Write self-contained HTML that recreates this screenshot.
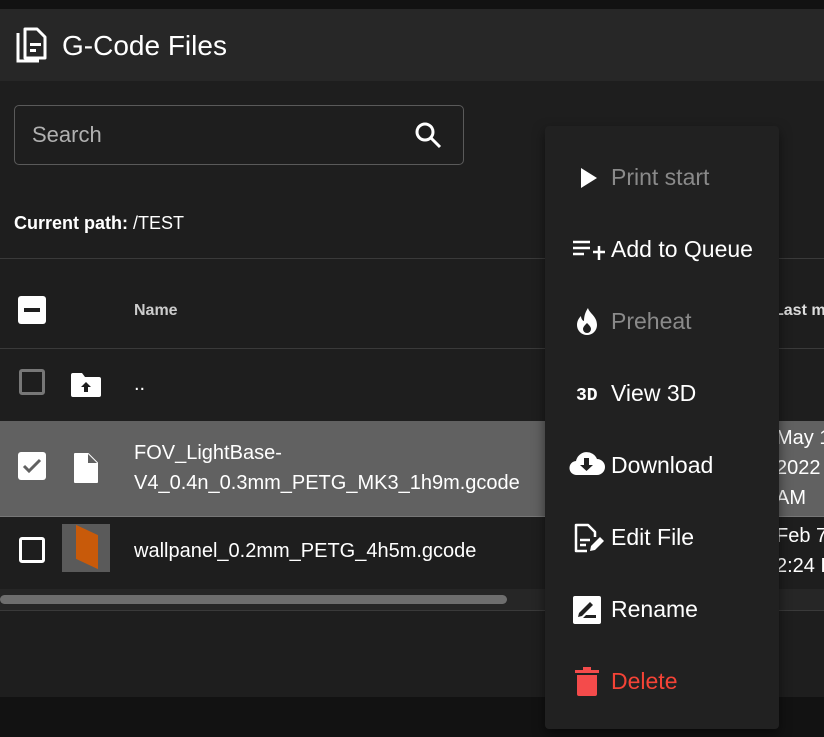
<!DOCTYPE html>
<html><head><style>
*{margin:0;padding:0;box-sizing:border-box}
body{width:824px;height:737px;background:#121212;font-family:"Liberation Sans",Roboto,sans-serif;color:#fff;position:relative;overflow:hidden}
.abs{position:absolute;white-space:nowrap}
.card{left:0;top:9px;width:824px;height:688px;background:#1e1e1e}
.hdr{left:0;top:9px;width:824px;height:72px;background:#272727}
.line{position:absolute;left:0;width:824px;height:1px;background:#3a3a3a}
.menu{left:545px;top:126px;width:234px;height:603px;background:#212121;border-radius:4px;box-shadow:0 5px 12px rgba(0,0,0,.5)}
.mi{position:absolute;left:66px;font-size:23px;line-height:28px;white-space:nowrap}
.ic{position:absolute}
</style></head><body>
<div class="abs card"></div>
<div class="abs hdr"></div>
<svg class="ic" style="left:16px;top:27px" width="32" height="36" viewBox="0 0 32 36"><path d="M2 6v28h21" fill="none" stroke="#fff" stroke-width="3"/><path d="M9 2h12l8 8v21H9z" fill="none" stroke="#fff" stroke-width="3" stroke-linejoin="round"/><rect x="14" y="16" width="11" height="3" fill="#fff"/><rect x="14" y="22" width="6" height="3" fill="#fff"/></svg>
<div class="abs" style="left:62px;top:29px;font-size:28px;line-height:34px">G-Code Files</div>
<div class="abs" style="left:14px;top:105px;width:450px;height:60px;border:1px solid #5a5a5a;border-radius:5px"></div>
<div class="abs" style="left:32px;top:122px;font-size:22px;color:#b0b0b0">Search</div>
<svg class="ic" style="left:413px;top:120px" width="30" height="30" viewBox="0 0 30 30"><circle cx="12" cy="12" r="8" fill="none" stroke="#fff" stroke-width="3"/><path d="M18 18l9 9" stroke="#fff" stroke-width="3"/></svg>
<div class="abs" style="left:14px;top:213px;font-size:18px"><b>Current path:</b> /TEST</div>
<div class="line" style="top:258px"></div>
<div class="abs" style="left:18px;top:296px;width:28px;height:28px;background:#fff;border-radius:3px"><div style="position:absolute;left:6px;top:12px;width:16px;height:4px;background:#1e1e1e"></div></div>
<div class="abs" style="left:134px;top:302px;font-size:16px;font-weight:bold;color:#ccc">Name</div>
<div class="abs" style="left:774px;top:302px;font-size:16px;font-weight:bold;color:#ddd">Last m</div>
<div class="line" style="top:348px"></div>
<div class="abs" style="left:19px;top:369px;width:26px;height:26px;border:3px solid #777;border-radius:3px"></div>
<svg class="ic" style="left:70px;top:372px" width="32" height="26" viewBox="0 0 32 26"><path d="M1 3a2 2 0 012-2h9l3 4h14a2 2 0 012 2v16a2 2 0 01-2 2H3a2 2 0 01-2-2z" fill="#fff"/><path d="M16 10l-5 5h3v5h4v-5h3z" fill="#1e1e1e"/></svg>
<div class="abs" style="left:134px;top:373px;font-size:20px">..</div>
<div class="abs" style="left:0;top:421px;width:824px;height:95px;background:#616161"></div>
<div class="abs" style="left:18px;top:452px;width:28px;height:28px;background:#fff;border-radius:3px"></div>
<svg class="ic" style="left:18px;top:452px" width="28" height="28"><path d="M6 14l5 5 11-11" fill="none" stroke="#616161" stroke-width="3"/></svg>
<svg class="ic" style="left:73px;top:452px" width="26" height="32" viewBox="0 0 26 32"><path d="M2 2h13l9 9v19H2z" fill="#fff" stroke="#fff" stroke-linejoin="round" stroke-width="2"/><path d="M15 2v9h9" fill="#616161"/></svg>
<div class="abs" style="left:134px;top:438px;font-size:20px;line-height:30px">FOV_LightBase-<br>V4_0.4n_0.3mm_PETG_MK3_1h9m.gcode</div>
<div class="abs" style="left:776px;top:423px;font-size:20px;line-height:30px">May 1<br>2022<br>AM</div>
<div class="line" style="top:516px;background:#777"></div>
<div class="abs" style="left:19px;top:537px;width:26px;height:26px;border:3px solid #fff;border-radius:3px"></div>
<div class="abs" style="left:62px;top:524px;width:48px;height:48px;background:#5a5a5a;overflow:hidden"><div style="position:absolute;left:14px;top:6px;width:22px;height:34px;background:#c85a0a;transform:skewY(25deg)"></div></div>
<div class="abs" style="left:134px;top:540px;font-size:20px">wallpanel_0.2mm_PETG_4h5m.gcode</div>
<div class="abs" style="left:776px;top:521px;font-size:20px;line-height:30px">Feb 7<br>2:24 P</div>
<div class="abs" style="left:0;top:589px;width:824px;height:21px;background:#262626"></div>
<div class="abs" style="left:0;top:595px;width:507px;height:9px;background:#6e6e6e;border-radius:5px"></div>
<div class="line" style="top:610px"></div>
<div class="abs menu">
<svg class="ic" style="left:34px;top:40px" width="20" height="24"><path d="M2 2l16 10-16 10z" fill="#fff"/></svg>
<div class="mi" style="top:37px;color:#8a8a8a">Print start</div>
<svg class="ic" style="left:28px;top:113px" width="32" height="24"><path d="M0 3h17M0 9h17M0 15h11M20 13h12M26 7v14" stroke="#fff" stroke-width="2.5"/></svg>
<div class="mi" style="top:109px">Add to Queue</div>
<svg class="ic" style="left:30px;top:181px" width="24" height="30" viewBox="0 0 24 30"><path d="M13 1c1 5 9 8 9 17a10 10 0 01-20 0c0-5 3-8 4-9 0 3 2 5 3 5 0-6 2-10 4-13z" fill="#fff"/><path d="M12 16c-2 2-4 4-4 6a4 4 0 008 0c0-2-2-4-4-6z" fill="#212121"/></svg>
<div class="mi" style="top:181px;color:#8a8a8a">Preheat</div>
<div class="mi" style="left:31px;top:256px;font-size:18px;font-weight:bold;font-family:'Liberation Mono',monospace">3D</div>
<div class="mi" style="top:253px">View 3D</div>
<svg class="ic" style="left:24px;top:324px" width="36" height="26" viewBox="0 0 36 26"><path d="M8 25a7 7 0 01-1-14 11 11 0 0121-2 8 8 0 010 16z" fill="#fff"/><path d="M15 8h5v7h4l-6.5 6L11 15h4z" fill="#212121"/></svg>
<div class="mi" style="top:325px">Download</div>
<svg class="ic" style="left:28px;top:396px" width="32" height="32" viewBox="0 0 32 32"><path d="M14 29H3V3h12l7 7v5" fill="none" stroke="#fff" stroke-width="2.5" stroke-linejoin="round"/><path d="M7 18h10M7 23h6" stroke="#fff" stroke-width="2.5"/><path d="M17 29l1-5 9-9 4 4-9 9z" fill="#fff"/></svg>
<div class="mi" style="top:397px">Edit File</div>
<svg class="ic" style="left:28px;top:470px" width="28" height="28" viewBox="0 0 28 28"><rect x="0" y="0" width="28" height="28" rx="2" fill="#fff"/><path d="M5 21l1-4 11-11 3 3-11 11z M10 22h13v-3H13z" fill="#212121"/></svg>
<div class="mi" style="top:469px">Rename</div>
<svg class="ic" style="left:30px;top:540px" width="24" height="30" viewBox="0 0 24 30"><path d="M0 4h24v3H0zM8 1h8v3H8z" fill="#f44b4b"/><path d="M2 9h20v19a2 2 0 01-2 2H4a2 2 0 01-2-2z" fill="#f44b4b"/></svg>
<div class="mi" style="top:541px;color:#f44336">Delete</div>
</div>
</body></html>
